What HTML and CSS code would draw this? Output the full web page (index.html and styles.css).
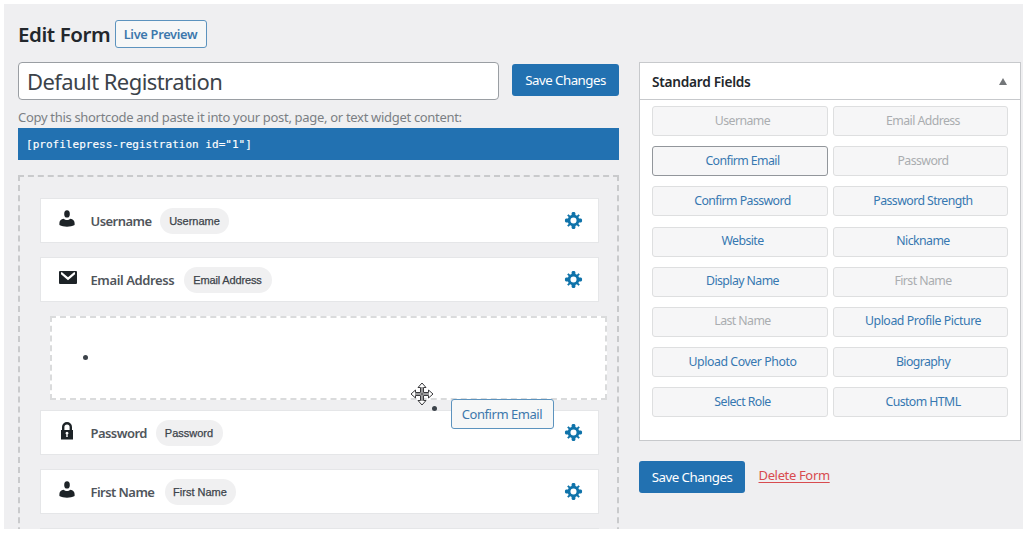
FILE: index.html
```html
<!DOCTYPE html>
<html lang="en">
<head>
<meta charset="utf-8">
<title>Edit Form</title>
<link rel="stylesheet" href="styles.css">
</head>
<body>
<svg class="defs" width="0" height="0" aria-hidden="true">
  <symbol id="user" viewBox="0 0 16 17"><ellipse cx="8" cy="3.900" rx="2.800" ry="3.600"/><path d="M4.600 8.700C5.600 9.600 6.700 10 8 10s2.400-.4 3.400-1.300c2.700.3 4.200 2.200 4.200 4.300v2c-2.200 1.200-4.700 1.700-7.600 1.700S2.600 16.200.4 15v-2c0-2.100 1.500-4 4.200-4.300z"/></symbol>
  <symbol id="mail" viewBox="0 0 18 13"><path fill-rule="evenodd" d="M1 0h16a1 1 0 0 1 1 1v11a1 1 0 0 1-1 1H1a1 1 0 0 1-1-1V1a1 1 0 0 1 1-1zM2 1.300v2L9 9.200l7-5.900v-2h-1L9 6.200 3 1.300z"/></symbol>
  <symbol id="lock" viewBox="0 0 14 18"><path fill-rule="evenodd" d="M1 8h1V5a5 5 0 0 1 10 0v3h1v9.500H1zM4.400 8h5.200V5a2.600 2.600 0 0 0-5.200 0zM6.200 15h1.600l-.2-2.500a1.400 1.400 0 1 0-1.200 0z"/></symbol>
  <symbol id="gear" viewBox="0 0 20 20"><path fill-rule="evenodd" d="M18 12h-2.200c-.2.600-.4 1.100-.7 1.600l1.600 1.600-1.500 1.500-1.600-1.600c-.5.300-1 .500-1.600.700V18l-1 1H9l-1-1v-2.200c-.6-.2-1.100-.4-1.600-.7l-1.600 1.600-1.500-1.500 1.600-1.600c-.3-.5-.5-1-.7-1.600H2l-1-1V9l1-1h2.200c.2-.6.4-1.100.7-1.600L3.300 4.800l1.500-1.500 1.600 1.600c.5-.3 1-.5 1.600-.7V2l1-1h2l1 1v2.200c.6.2 1.100.4 1.600.7l1.600-1.600 1.500 1.500-1.600 1.600c.3.500.5 1 .7 1.600H18l1 1v2zM10 13.200a3.200 3.200 0 1 0 0-6.400 3.200 3.200 0 0 0 0 6.400z"/></symbol>
</svg>
<main class="page">
  <section class="editor">
    <header class="heading"><h1>Edit Form</h1><a class="btn preview">Live Preview</a></header>
    <div class="title-row"><div class="title-input"><span>Default Registration</span></div><button class="primary">Save Changes</button></div>
    <p class="hint">Copy this shortcode and paste it into your post, page, or text widget content:</p>
    <code class="shortcode">[profilepress-registration id="1"]</code>
    <div class="canvas">
      <div class="field"><svg class="icon"><use href="#user"/></svg><b class="n1">Username</b><span class="tag t1">Username</span><svg class="gear"><use href="#gear"/></svg></div>
      <div class="field"><svg class="icon mail"><use href="#mail"/></svg><b class="n2">Email Address</b><span class="tag t2">Email Address</span><svg class="gear"><use href="#gear"/></svg></div>
      <div class="drop"><i class="dot"></i></div>
      <div class="field"><svg class="icon lock"><use href="#lock"/></svg><b class="n3">Password</b><span class="tag t3">Password</span><svg class="gear"><use href="#gear"/></svg></div>
      <div class="field"><svg class="icon"><use href="#user"/></svg><b class="n4">First Name</b><span class="tag t4">First Name</span><svg class="gear"><use href="#gear"/></svg></div>
      <div class="field"></div>
    </div>
  </section>
  <aside class="sidebar">
    <div class="panel">
      <div class="panel-head"><h2>Standard Fields</h2><svg class="arrow" viewBox="0 0 8 7"><path d="M4 0l4 7H0z"/></svg></div>
      <div class="grid">
        <a class="off">Username</a><a class="off">Email Address</a>
        <a class="active">Confirm Email</a><a class="off">Password</a>
        <a>Confirm Password</a><a>Password Strength</a>
        <a>Website</a><a>Nickname</a>
        <a>Display Name</a><a class="off">First Name</a>
        <a class="off">Last Name</a><a>Upload Profile Picture</a>
        <a>Upload Cover Photo</a><a>Biography</a>
        <a>Select Role</a><a>Custom HTML</a>
      </div>
    </div>
    <div class="actions"><button class="primary">Save Changes</button><a class="delete">Delete Form</a></div>
  </aside>
  <div class="dragged"><i class="dot"></i><span class="btn">Confirm Email</span></div>
  <svg class="cursor" viewBox="0 0 24 24"><path d="M12 1l4 4.500h-2.500v5h5V8l4.500 4-4.500 4v-2.500h-5v5H16L12 23l-4-4.500h2.500v-5h-5V16L1 12l4.500-4v2.500h5v-5H8z"/><path d="M12 5v14M5 12h14"/></svg>
</main>
</body>
</html>
```
FILE: styles.css
```css
* { box-sizing: border-box; }
body { margin: 0; background: #fff; font-family: "Noto Sans", "Open Sans", sans-serif; color: #3c434a; overflow: hidden; }
.defs { position: absolute; }
.page { position: relative; display: flex; gap: 20px; width: 1019px; height: 525px; margin: 4px 0 0 4px; padding: 0 2px 0 14px; background: #efeff1; overflow: hidden; }
.editor { width: 601px; flex: none; }
.heading { display: flex; gap: 4.500px; height: 58px; padding-top: 16px; }
h1 { margin: 0; width: 92px; font-size: 20.500px; line-height: 28px; font-weight: 600; letter-spacing: -.4px; white-space: nowrap; color: #23272c; }
.btn { display: flex; align-items: center; justify-content: center; border: 1px solid #5c93be; border-radius: 3px; background: #f6f7f7; color: #3d78ac; white-space: nowrap; }
.preview { width: 92px; height: 28px; font-size: 12.800px; font-weight: 600; letter-spacing: -.3px; }
.title-row { display: flex; justify-content: space-between; height: 38px; }
.title-input { display: flex; align-items: center; width: 481px; padding: 0 8px; border: 1px solid #9a9ea3; border-radius: 4px; background: #fff; font-size: 22px; letter-spacing: -.57px; white-space: nowrap; }
.primary { width: 107px; height: 32px; margin: 2px 0 0; padding: 0; border: 0; border-radius: 3px; background: #2271b1; color: #fff; font: 13.300px "Noto Sans", sans-serif; letter-spacing: -.53px; white-space: nowrap; }
.hint { margin: 7px 0 1px; height: 20px; font-size: 13px; line-height: 20px; letter-spacing: -.31px; white-space: nowrap; color: #7b7f84; }
.shortcode { display: block; height: 32px; padding-left: 8px; background: #2271b1; color: #fff; font: 11px/33px "DejaVu Sans Mono", monospace; letter-spacing: .02px; -webkit-text-stroke: .15px #fff; }
.canvas { display: flex; flex-direction: column; gap: 13.800px; height: 600px; margin-top: 15px; padding: 20.500px 18px 0 20px; border: 2px dashed #c9cacc; }
.field { display: flex; align-items: center; flex: none; height: 45.300px; padding: 0 15.500px 0 18.500px; background: #fff; border: 1px solid #e5e6e8; }
.icon { width: 16px; height: 17px; margin: -4px 15.500px 0 -.5px; fill: #1d2327; }
.mail { width: 18px; height: 13px; margin-right: 14px; margin-left: -1px; }
.lock { width: 14px; height: 18px; margin-right: 16.500px; margin-left: .5px; }
.icon, .field b, .tag, .gear { flex: none; }
.field b { font-size: 13px; font-weight: 600; letter-spacing: -.55px; white-space: nowrap; color: #50555b; padding-top: 1px; }
.n1 { width: 60.500px; } .n2 { width: 84px; } .n3 { width: 56px; } .n4 { width: 65px; }
.field .n2 { letter-spacing: -.4px; }
.tag { display: flex; align-items: center; justify-content: center; height: 26px; margin-top: 1px; margin-left: 9px; border-radius: 13px; background: #f0f0f1; font: 11px "Liberation Sans", Arial, sans-serif; -webkit-text-stroke: .25px #3c434a; white-space: nowrap; }
.t1 { width: 69px; } .t2 { width: 88px; letter-spacing: -.15px; } .t3 { width: 67px; } .t4 { width: 71px; }
.gear { width: 19px; height: 19px; margin: 0 0 0 auto; fill: #0f73aa; }
.drop { display: flex; align-items: center; flex: none; width: 557px; height: 84px; margin: 0 0 -3.500px 10px; padding: 0 0 1px 30.500px; border: 2px dashed #dadbdc; background: #fff; }
.dot { flex: none; width: 5px; height: 5px; border-radius: 50%; background: #3c434a; }
.sidebar { width: 382px; padding-top: 58px; }
.panel { height: 379px; border: 1px solid #c7c9cc; background: #fff; }
.panel-head { display: flex; align-items: center; justify-content: space-between; height: 37px; padding: 0 13.500px 0 12px; border-bottom: 1px solid #c7c9cc; }
h2 { margin: 0; font-size: 13.700px; font-weight: 600; letter-spacing: -.27px; white-space: nowrap; color: #23272c; }
.arrow { width: 8px; height: 7px; fill: #737679; }
.grid { display: grid; grid-template-columns: 176px 175px; grid-auto-rows: 30px; gap: 10.200px 5px; padding: 6px 0 0 12px; }
.grid a { display: flex; align-items: center; justify-content: center; padding-left: 5px; padding-bottom: 2px; border: 1px solid #dedfe0; border-radius: 3px; background: #f6f6f7; color: #3778b1; font-size: 12.300px; letter-spacing: -.57px; white-space: nowrap; }
.grid a:nth-child(n+12):nth-child(-n+13) { letter-spacing: -.43px; }
.grid .off { color: #aaadb0; }
.grid .active { border-color: #92969b; }
.actions { display: flex; height: 32px; margin-top: 20px; gap: 13.500px; }
.actions .primary { width: 106px; margin: 0; }
.delete { font-size: 13px; line-height: 29px; letter-spacing: -.35px; color: #d84b4f; text-decoration: underline; text-underline-offset: 2px; white-space: nowrap; }
.dragged { position: absolute; left: 427.500px; top: 395px; display: flex; gap: 14px; }
.dragged .dot { margin-top: 6.500px; }
.dragged .btn { width: 103px; height: 30px; font-size: 13px; letter-spacing: -.45px; }
.cursor { position: absolute; left: 406px; top: 378px; width: 24px; height: 24px; fill: #fff; stroke: #3a3a3d; stroke-width: 1; }
```
